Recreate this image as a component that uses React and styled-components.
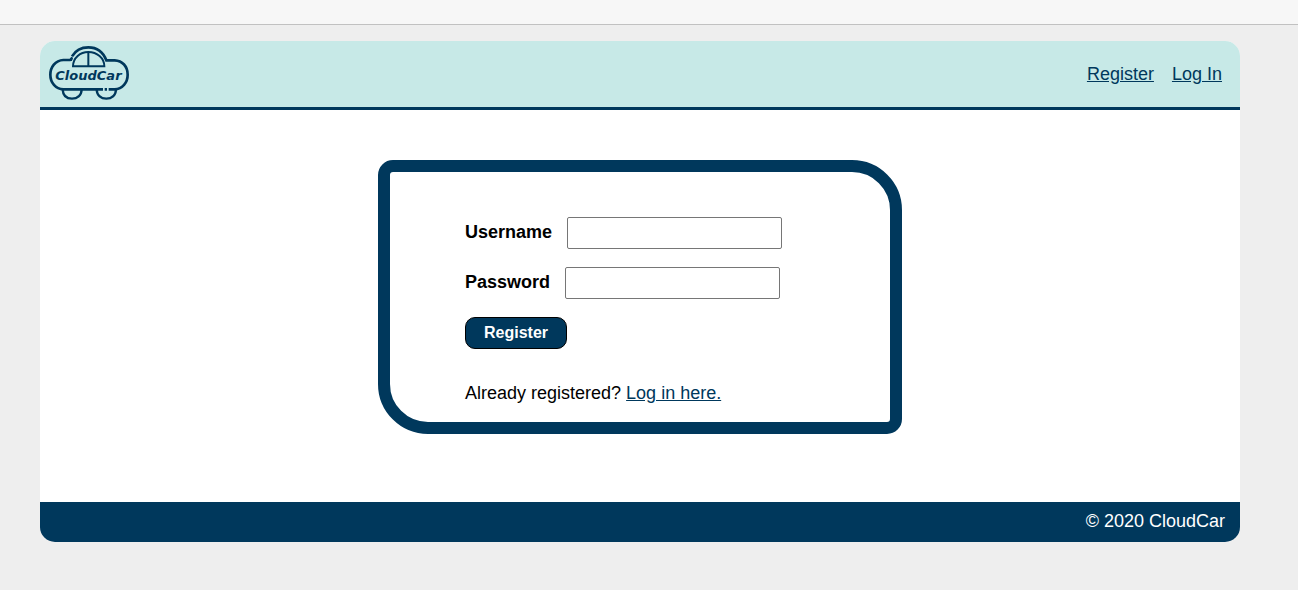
import React from "react";
import styled, { createGlobalStyle, ThemeProvider } from "styled-components";

const theme = {
  navy: "#00385c",
  mint: "#c7e9e7",
  page: "#eeeeee",
};

const GlobalStyle = createGlobalStyle`
  *, *::before, *::after {
    box-sizing: border-box;
  }
  body {
    margin: 0;
    background: ${theme.page};
    color: #000;
    font: 18px/20px "Liberation Sans", Arial, sans-serif;
  }
`;

const TopStrip = styled.div`
  height: 25px;
  background: #f7f7f7;
  border-bottom: 1px solid #c1c1c1;
`;

const Page = styled.div`
  margin: 16px 58px 48px 40px;
  border-radius: 15px;
  overflow: hidden;
  background: #fff;
`;

const Header = styled.header`
  display: flex;
  align-items: center;
  justify-content: space-between;
  padding: 5px 18px 7px 9px;
  background: ${({ theme }) => theme.mint};
  border-bottom: 3px solid ${({ theme }) => theme.navy};
`;

const Nav = styled.nav`
  display: flex;
  gap: 18px;
  padding-top: 2px;
`;

const TextLink = styled.a`
  color: ${({ theme }) => theme.navy};
`;

const LogoLink = styled.a`
  display: block;
  height: 54px;
`;

const LogoDrawing = styled.svg`
  display: block;
  width: 80px;
  height: 54px;
  fill: none;
  stroke: ${({ theme }) => theme.navy};
  stroke-width: 8;

  text {
    fill: ${({ theme }) => theme.navy};
    stroke: none;
    font: italic bold 39px "DejaVu Sans", sans-serif;
  }
`;

const Main = styled.main`
  padding: 50px 16px 68px;
`;

const Card = styled.section`
  max-width: 524px;
  margin: 0 auto;
  padding: 45px 63px 19px 75px;
  border: 12px solid ${({ theme }) => theme.navy};
  border-radius: 15px 50px;
`;

const Form = styled.form`
  display: flex;
  flex-direction: column;
  align-items: flex-start;
  gap: 18px;
`;

const Field = styled.div`
  display: flex;
  gap: 15px;
`;

const Label = styled.label`
  padding-top: 5px;
  font-weight: bold;
`;

const Input = styled.input`
  width: 215px;
  height: 32px;
  padding: 4px;
  border: 1px solid #767676;
  border-radius: 2px;
  background: #fff;
  font: inherit;
`;

const SubmitButton = styled.button`
  height: 32px;
  padding: 0 18px;
  border: 1px solid #000;
  border-radius: 10px;
  background: ${({ theme }) => theme.navy};
  color: #fff;
  font: bold 16px/18px "Liberation Sans", Arial, sans-serif;
`;

const Note = styled.p`
  margin: 34px 0 0;
`;

const Footer = styled.footer`
  padding: 9px 15px 11px;
  background: ${({ theme }) => theme.navy};
  color: #fff;
  text-align: right;
`;

function Logo() {
  return (
    <LogoDrawing viewBox="39 30 240 162" role="img" aria-label="CloudCar">
      <path d="M104 72 H82 C58 73 43 93 43 116 C43 140 59 159 82 160 H201" />
      <path d="M218 160 H236 C259 159 275 140 275 116 C275 91 259 74 236 73 H211 C201 47 181 34 157 34 C134 34 118 44 108 61" />
      <path d="M104 75 Q104 67 110 65" />
      <path d="M111 91 C111 65 133 48 157 48 C183 48 205 66 205 91 Z" strokeWidth="6" />
      <path d="M157 48 V91" strokeWidth="6" />
      <path d="M80 161 C81 179 92 188 108 188 C124 188 136 179 137 161" strokeWidth="7" />
      <path d="M182 161 C183 179 195 188 211 188 C227 188 239 179 240 161" strokeWidth="7" />
      <path d="M206 160 H213" />
      <text x="58" y="133">CloudCar</text>
    </LogoDrawing>
  );
}

export default function App() {
  return (
    <ThemeProvider theme={theme}>
      <GlobalStyle />
      <TopStrip />
      <Page>
        <Header>
          <LogoLink href="#home">
            <Logo />
          </LogoLink>
          <Nav>
            <TextLink href="#register">Register</TextLink>
            <TextLink href="#login">Log In</TextLink>
          </Nav>
        </Header>
        <Main>
          <Card>
            <Form onSubmit={(event) => event.preventDefault()}>
              <Field>
                <Label htmlFor="username">Username</Label>
                <Input id="username" name="username" type="text" autoComplete="username" />
              </Field>
              <Field>
                <Label htmlFor="password">Password</Label>
                <Input id="password" name="password" type="password" autoComplete="new-password" />
              </Field>
              <SubmitButton type="submit">Register</SubmitButton>
            </Form>
            <Note>
              Already registered? <TextLink href="#login">Log in here.</TextLink>
            </Note>
          </Card>
        </Main>
        <Footer>© 2020 CloudCar</Footer>
      </Page>
    </ThemeProvider>
  );
}
